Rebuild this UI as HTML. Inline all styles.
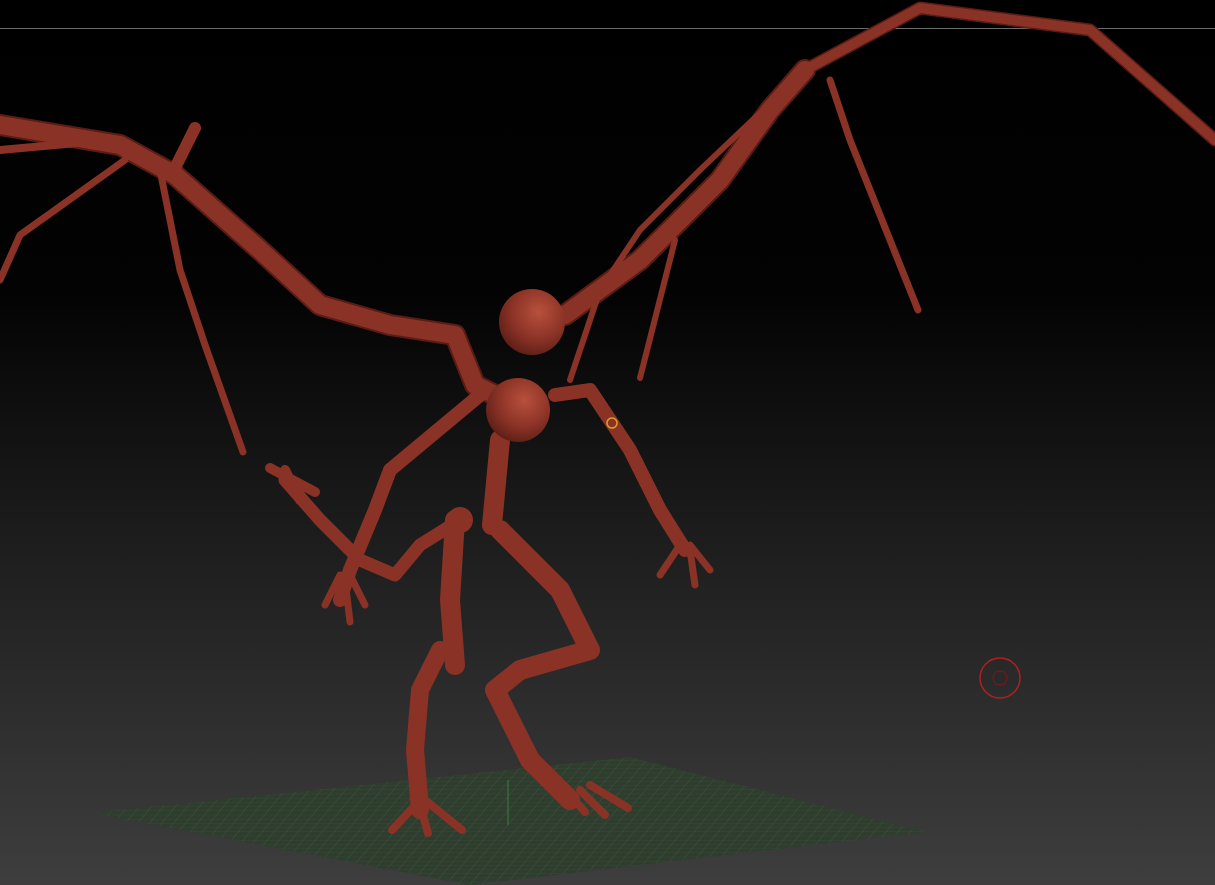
<!DOCTYPE html>
<html><head><meta charset="utf-8"><style>
html,body{margin:0;padding:0;width:1215px;height:885px;overflow:hidden;background:#000}
svg{display:block}
</style></head><body>
<svg width="1215" height="885" viewBox="0 0 1215 885" xmlns="http://www.w3.org/2000/svg">
<defs>
<linearGradient id="bg" x1="0" y1="0" x2="0" y2="1">
<stop offset="0" stop-color="#000"/>
<stop offset="0.33" stop-color="#030303"/>
<stop offset="0.6" stop-color="#1c1c1c"/>
<stop offset="1" stop-color="#3e3e3e"/>
</linearGradient>
<radialGradient id="ball" cx="0.6" cy="0.35" r="0.7">
<stop offset="0" stop-color="#b8503c"/>
<stop offset="0.6" stop-color="#8a3226"/>
<stop offset="1" stop-color="#5a1e16"/>
</radialGradient>
<pattern id="grid" width="12" height="12" patternUnits="userSpaceOnUse" patternTransform="skewX(-40) scale(1,0.35)">
<path d="M0 0H12M0 0V12" stroke="#4a6a4a" stroke-width="1" fill="none"/>
</pattern>
</defs>
<rect width="1215" height="885" fill="url(#bg)"/>
<line x1="0" y1="28.5" x2="1215" y2="28.5" stroke="#6a6a6a" stroke-width="1"/>
<polygon points="92,813 630,757 925,832 470,885" fill="#2f3d2e"/>
<polygon points="92,813 630,757 925,832 470,885" fill="url(#grid)" opacity="0.6"/>
<line x1="508" y1="780" x2="508" y2="825" stroke="#3c7a3c" stroke-width="1"/>
<g fill="none" stroke-linecap="round" stroke-linejoin="round">
<g stroke="#5a1c14">
<path d="M0,125 L120,145 L175,175 L260,250 L320,305 L390,325 L455,335 L475,385 L515,405" stroke-width="22"/>
<path d="M565,315 L640,260 L720,180 L770,110 L805,70" stroke-width="22"/>
<path d="M805,70 L920,8 L1090,30 L1215,140" stroke-width="13"/>
</g>
<g stroke="#8a3226">
<path d="M0,125 L120,145 L175,175 L260,250 L320,305 L390,325 L455,335 L475,385 L515,405" stroke-width="18"/>
<path d="M175,168 L195,128" stroke-width="12"/>
<path d="M160,170 L180,270 L205,345 L243,452" stroke-width="7"/>
<path d="M125,160 L20,235 L0,280" stroke-width="7"/>
<path d="M0,150 L110,140" stroke-width="8"/>
<path d="M565,315 L640,260 L720,180 L770,110 L805,70" stroke-width="18"/>
<path d="M805,70 L920,8 L1090,30 L1215,140" stroke-width="10"/>
<path d="M830,80 L850,140 L918,310" stroke-width="7"/>
<path d="M800,75 L700,170 L640,230 L600,290 L570,380" stroke-width="6"/>
<path d="M675,240 L640,378" stroke-width="6"/>
<path d="M500,440 L492,525" stroke-width="20"/>
<path d="M480,395 L450,420 L390,470 L375,510 L350,570 L340,600" stroke-width="14"/>
<path d="M555,395 L590,390 L630,450 L660,510 L685,550" stroke-width="14"/>
<path d="M455,520 L450,600 L455,665" stroke-width="20"/>
<path d="M440,650 L420,690 L415,750 L420,810" stroke-width="18"/>
<path d="M500,530 L560,590 L590,650 L520,670 L495,690 L530,760 L570,800" stroke-width="20"/>
<path d="M460,520 L420,545 L395,575 L360,560 L320,520 L285,480" stroke-width="13"/>
<path d="M270,468 L315,492 M285,470 L300,500" stroke-width="10"/>
<path d="M340,575 L325,605 M345,580 L350,622 M350,575 L365,605" stroke-width="7"/>
<path d="M680,545 L660,575 M690,550 L695,585 M690,545 L710,570" stroke-width="7"/>
<path d="M420,800 L392,830 M420,805 L428,833 M425,800 L462,830" stroke-width="8"/>
<path d="M570,795 L585,812 M580,790 L605,815 M590,785 L628,808" stroke-width="8"/>
</g>
</g>
<circle cx="532" cy="322" r="33" fill="url(#ball)"/>
<circle cx="518" cy="410" r="32" fill="url(#ball)"/>
<circle cx="460" cy="520" r="13" fill="#8a3226"/>
<circle cx="612" cy="423" r="5" fill="none" stroke="#d8a020" stroke-width="1.5"/>
<circle cx="1000" cy="678" r="20" fill="none" stroke="#b02020" stroke-width="1.5"/>
<circle cx="1000" cy="678" r="7" fill="none" stroke="#801818" stroke-width="1"/>
</svg>
</body></html>
